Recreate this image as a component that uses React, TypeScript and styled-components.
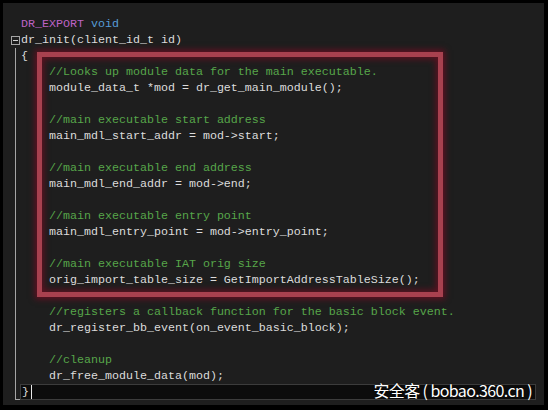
import React from "react";
import styled, { createGlobalStyle } from "styled-components";

const Global = createGlobalStyle`
  html, body { margin: 0; padding: 0; background: #000; }
  * { box-sizing: border-box; }
`;

const Frame = styled.div`
  position: relative;
  width: 548px;
  height: 410px;
  background: #000;
  padding: 3px 4px 5px 3px;
`;

const Editor = styled.div`
  position: relative;
  height: 100%;
  background: #1e1e1e;
  display: grid;
  grid-template-columns: 18px 1fr;
  padding-top: 13px;
  font-family: "Liberation Mono", "DejaVu Sans Mono", monospace;
  font-size: 11.67px;
`;

const Gutter = styled.div`
  display: flex;
  flex-direction: column;
`;

const GutterSpacer = styled.div`
  height: 16px;
  flex: none;
`;

const FoldRow = styled.div`
  height: 16px;
  flex: none;
  display: flex;
  align-items: center;
  padding-left: 8px;
`;

const FoldBox = styled.div`
  width: 9px;
  height: 9px;
  border: 1px solid #a5a5a5;
  display: flex;
  align-items: center;
  justify-content: center;
  &::after {
    content: "";
    width: 5px;
    height: 1px;
    background: #d0d0d0;
  }
`;

const FoldLine = styled.div`
  margin-left: 12px;
  height: 352px;
  width: 5px;
  border-left: 1px solid #a5a5a5;
  border-bottom: 1px solid #a5a5a5;
`;

const Code = styled.div`
  display: flex;
  flex-direction: column;
  padding-right: 8px;
`;

const Line = styled.div<{ $indent?: number; $current?: boolean }>`
  height: 16px;
  line-height: 16px;
  white-space: pre;
  color: #dcdcdc;
  padding-left: ${(p) => (p.$indent ?? 0) * 7}px;
  ${(p) =>
    p.$current &&
    `
    background: #0c0c0c;
    border: 1px solid #3c3c3c;
    margin-left: -1px;
    padding-left: 1px;
    line-height: 14px;
    display: flex;
    align-items: center;
  `}
`;

const Macro = styled.span`
  color: #bd63c5;
`;
const Keyword = styled.span`
  color: #569cd6;
`;
const Comment = styled.span`
  color: #57a64a;
`;

const Caret = styled.span`
  display: inline-block;
  width: 1px;
  height: 14px;
  margin-left: 2px;
  background: #e8e8e8;
`;

const Highlight = styled.div`
  position: absolute;
  left: 34px;
  top: 49px;
  width: 406px;
  height: 245px;
  border: 5px solid #a8414f;
  box-shadow: 0 0 6px 2px rgba(130, 10, 35, 0.7),
    inset 0 0 6px 2px rgba(130, 10, 35, 0.65);
  pointer-events: none;
`;

const Watermark = styled.div`
  position: absolute;
  right: 16px;
  top: 380px;
  font-family: "Noto Sans CJK SC", "Noto Sans", sans-serif;
  font-size: 16px;
  line-height: 20px;
  color: #ffffff;
  letter-spacing: -0.6px;
  text-shadow: 0 0 2px #000;
`;

type Tok = { t: string; k?: "c" | "m" | "k" };
const lines: { indent?: number; toks: Tok[] }[] = [
  { toks: [{ t: "DR_EXPORT", k: "m" }, { t: " " }, { t: "void", k: "k" }] },
  { toks: [{ t: "dr_init(client_id_t id)" }] },
  { toks: [{ t: "{" }] },
  { indent: 4, toks: [{ t: "//Looks up module data for the main executable.", k: "c" }] },
  { indent: 4, toks: [{ t: "module_data_t *mod = dr_get_main_module();" }] },
  { toks: [] },
  { indent: 4, toks: [{ t: "//main executable start address", k: "c" }] },
  { indent: 4, toks: [{ t: "main_mdl_start_addr = mod->start;" }] },
  { toks: [] },
  { indent: 4, toks: [{ t: "//main executable end address", k: "c" }] },
  { indent: 4, toks: [{ t: "main_mdl_end_addr = mod->end;" }] },
  { toks: [] },
  { indent: 4, toks: [{ t: "//main executable entry point", k: "c" }] },
  { indent: 4, toks: [{ t: "main_mdl_entry_point = mod->entry_point;" }] },
  { toks: [] },
  { indent: 4, toks: [{ t: "//main executable IAT orig size", k: "c" }] },
  { indent: 4, toks: [{ t: "orig_import_table_size = GetImportAddressTableSize();" }] },
  { toks: [] },
  { indent: 4, toks: [{ t: "//registers a callback function for the basic block event.", k: "c" }] },
  { indent: 4, toks: [{ t: "dr_register_bb_event(on_event_basic_block);" }] },
  { toks: [] },
  { indent: 4, toks: [{ t: "//cleanup", k: "c" }] },
  { indent: 4, toks: [{ t: "dr_free_module_data(mod);" }] },
];

function renderTok(tok: Tok, i: number) {
  if (tok.k === "c") return <Comment key={i}>{tok.t}</Comment>;
  if (tok.k === "m") return <Macro key={i}>{tok.t}</Macro>;
  if (tok.k === "k") return <Keyword key={i}>{tok.t}</Keyword>;
  return <React.Fragment key={i}>{tok.t}</React.Fragment>;
}

export default function App() {
  return (
    <>
      <Global />
      <Frame>
        <Editor>
          <Gutter>
            <GutterSpacer />
            <FoldRow>
              <FoldBox />
            </FoldRow>
            <FoldLine />
          </Gutter>
          <Code>
            {lines.map((l, i) => (
              <Line key={i} $indent={l.indent}>
                {l.toks.length ? l.toks.map(renderTok) : " "}
              </Line>
            ))}
            <Line $current>
              {"}"}
              <Caret />
            </Line>
          </Code>
          <Highlight />
        </Editor>
        <Watermark>安全客 ( bobao.360.cn )</Watermark>
      </Frame>
    </>
  );
}
